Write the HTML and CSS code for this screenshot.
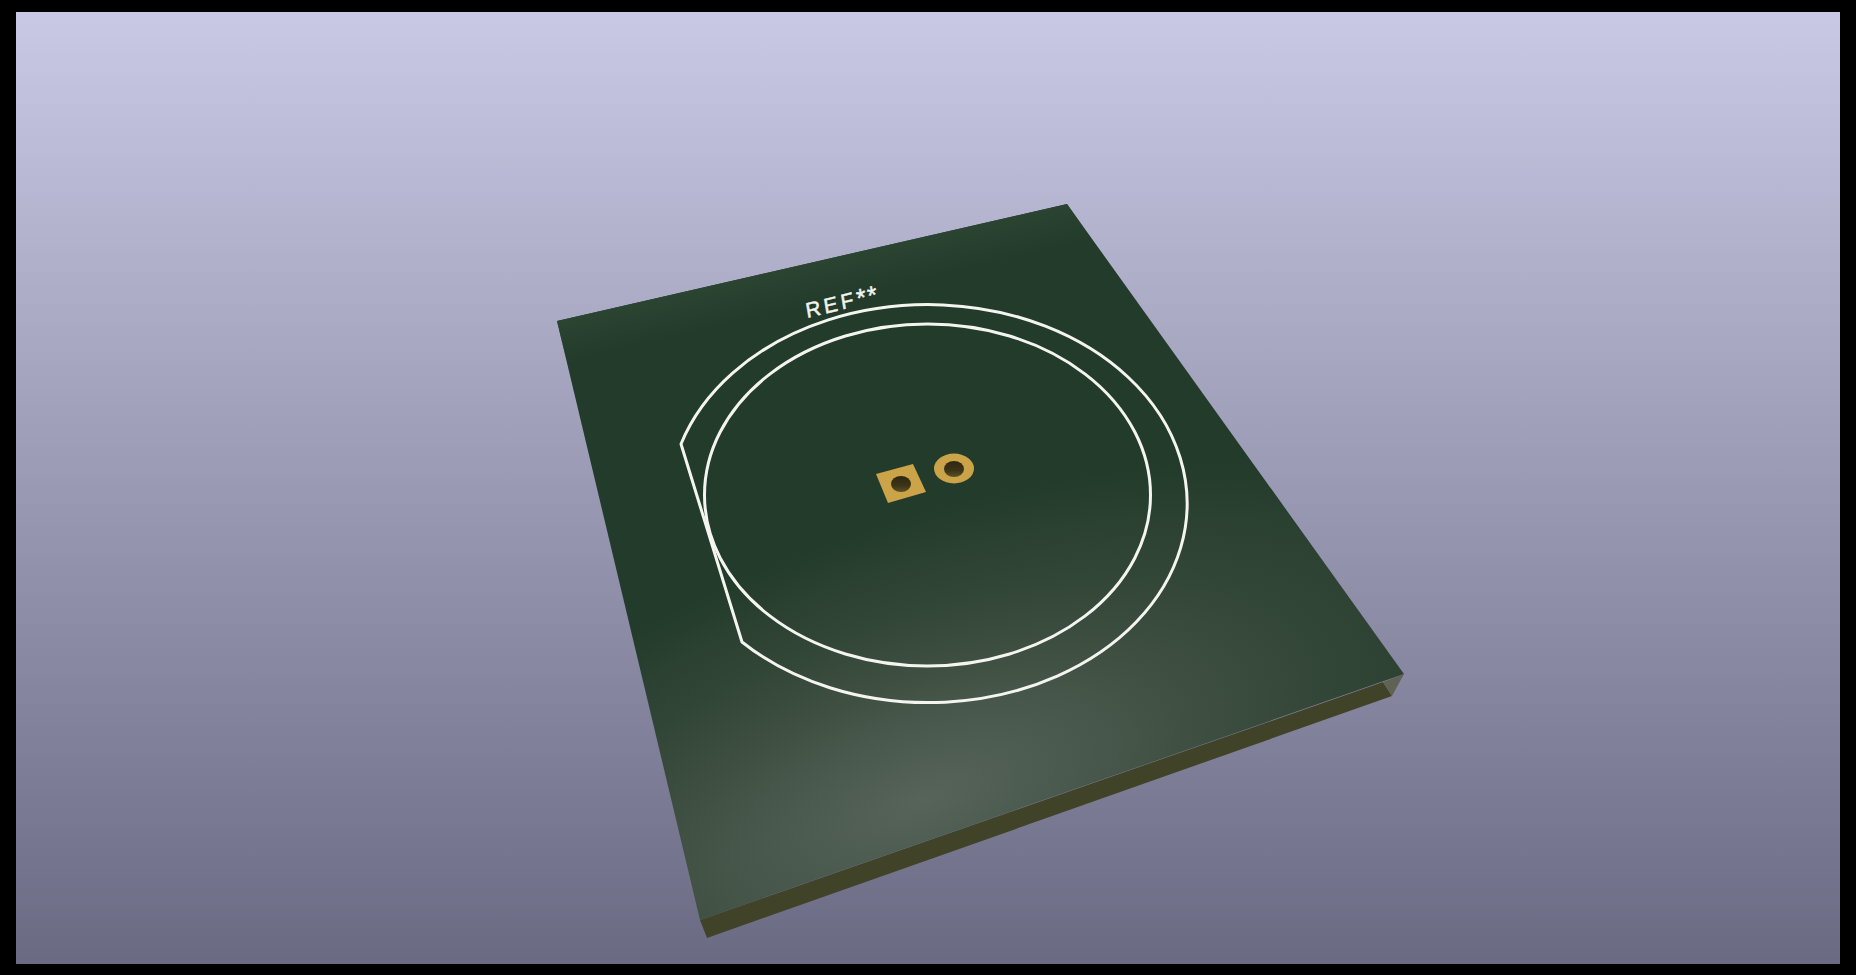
FILE: index.html
```html
<!DOCTYPE html>
<html lang="en">
<head>
<meta charset="utf-8">
<title>3D Viewer</title>
<link rel="stylesheet" href="styles.css">
</head>
<body>
<main class="canvas">
  <svg class="scene" viewBox="16 12 1824 952" xmlns="http://www.w3.org/2000/svg">
    <defs>
      <radialGradient id="sheen" gradientUnits="userSpaceOnUse" cx="0" cy="0" r="1" gradientTransform="translate(925 800) rotate(-20) scale(640 275)">
        <stop offset="0" stop-color="#566459"/>
        <stop offset="0.25" stop-color="#4a594d"/>
        <stop offset="0.6" stop-color="#35483a"/>
        <stop offset="1" stop-color="#233b2a"/>
      </radialGradient>
      <linearGradient id="hole" x1="0" y1="0" x2="0" y2="1">
        <stop offset="0" stop-color="#2e2812"/>
        <stop offset="0.6" stop-color="#3c3416"/>
        <stop offset="1" stop-color="#5f5022"/>
      </linearGradient>
      <linearGradient id="rim" gradientUnits="userSpaceOnUse" x1="802" y1="262" x2="812" y2="305">
        <stop offset="0" stop-color="#2c4432"/>
        <stop offset="1" stop-color="#2c4432" stop-opacity="0"/>
      </linearGradient>
    </defs>
    <polygon class="edge-front" points="700,920 1383,682 1392,696 707,938"/>
    <polygon class="edge-corner" points="1383,682 1404,674 1392,696"/>
    <polygon class="board" points="557,321 1067,204 1404,674 700,920"/>
    <polygon class="board-rim" points="557,321 1067,204 1098,248 567.500,365"/>
    <path class="silk" d="M681 444 A259 199 0 1 1 742 642 Z"/>
    <ellipse class="silk" cx="927.500" cy="495" rx="223" ry="171"/>
    <text class="ref" transform="translate(807 318) rotate(-13.5) skewX(-4)">REF<tspan class="ref-stars" dy="1.5">**</tspan></text>
    <polygon class="pad" points="876,474 913,464 926,492 888,503"/>
    <ellipse class="hole" cx="901" cy="484" rx="10" ry="8"/>
    <ellipse class="pad" cx="954" cy="468.500" rx="20" ry="15"/>
    <ellipse class="hole" cx="954" cy="469" rx="10" ry="8"/>
  </svg>
</main>
</body>
</html>
```
FILE: styles.css
```css
html, body {
  margin: 0;
  height: 100%;
  background: #000;
}
body {
  box-sizing: border-box;
  height: 975px;
  padding: 12px 16px 11px;
  overflow: hidden;
}
.canvas {
  height: 100%;
  background: linear-gradient(to bottom, #c9c9e5, #6a6a83);
}
.scene {
  display: block;
  width: 100%;
  height: 100%;
}
.board {
  fill: url(#sheen);
}
.board-rim {
  fill: url(#rim);
}
.edge-front {
  fill: #414329;
}
.edge-corner {
  fill: #5f6254;
}
.silk {
  fill: none;
  stroke: #f4f4f0;
  stroke-width: 3;
  stroke-linejoin: round;
}
.ref {
  fill: #f2f2ee;
  stroke: #f2f2ee;
  stroke-width: 0.5;
  font-family: "Liberation Sans", Arial, sans-serif;
  font-size: 21px;
  letter-spacing: 3.4px;
}
.ref-stars {
  font-size: 25px;
  letter-spacing: 1.5px;
}
.pad {
  fill: #cba348;
}
.hole {
  fill: url(#hole);
}
```
